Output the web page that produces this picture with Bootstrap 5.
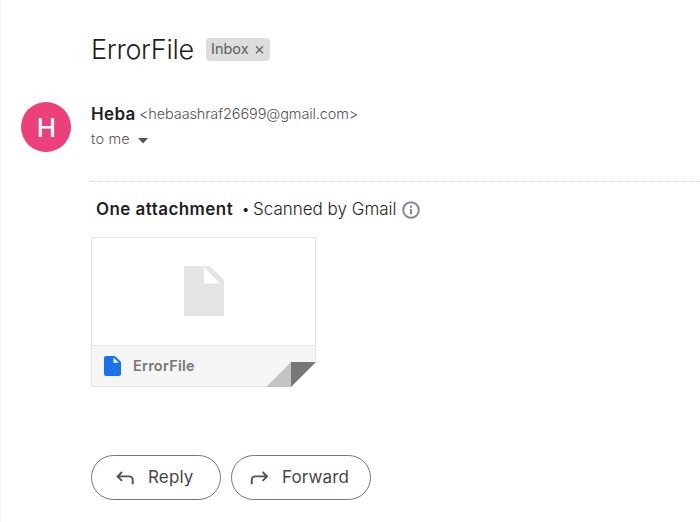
<!DOCTYPE html>
<html lang="en">
<head>
<meta charset="utf-8">
<meta name="viewport" content="width=device-width, initial-scale=1">
<title>ErrorFile</title>
<link href="https://cdn.jsdelivr.net/npm/bootstrap@5.3.0/dist/css/bootstrap.min.css" rel="stylesheet">
<style>
body{font-family:Inter,Roboto,"Liberation Sans",sans-serif;color:#1f1f1f;background:#fff;overflow:hidden;line-height:1}
.mail{height:522px;border-left:1px solid #f3f5fc;padding-left:90px}
.mail span,.mail h1{white-space:nowrap}
.subject-row{padding-top:35px;height:102px}
.subject{font-size:27px;font-weight:300;line-height:30px;width:115px;letter-spacing:-.3px}
.inbox-chip{height:23px;width:64px;margin-top:3px;padding:0 6px 0 5px;border-radius:4px;background:#ddd;color:#5e5e5e;font-size:14.5px}
.inbox-chip span{margin-top:-1px}
.sender-row{margin-left:-70px;height:79px}
.avatar{width:50px;height:50px;background:#ec407a;color:#fff;font-size:26px;font-weight:500;padding-left:1px;padding-top:2px}
.sender-info{margin-left:20px}
.from-line{height:24px}
.from-name{font-size:17px;font-weight:600;width:48px;letter-spacing:.35px}
.from-mail{font-size:14.5px;font-weight:300;color:#555;letter-spacing:-.12px}
.to-line{height:26px;color:#555;font-size:14.5px;font-weight:300;letter-spacing:.2px}
.divider{height:1px;background:repeating-linear-gradient(90deg,#d2d2d2 0 1px,#fff 1px 2px)}
.att-head{height:55px;padding-left:5px;font-size:17px}
.att-count{font-weight:600;width:146px;letter-spacing:.44px}
.att-dot{font-size:13px;width:11px}
.att-scan{font-weight:300;width:149px}
.att-card{width:225px;height:150px;border:1px solid #e5e5e5}
.att-preview{padding-bottom:2px}
.att-foot{height:41px;background:#f5f5f5;border-top:1px solid #e5e5e5;padding-left:12px}
.att-name{margin-left:12px;font-size:14.5px;font-weight:600;color:#777;letter-spacing:.25px}
.fold{right:-1px;bottom:-1px}
.actions{margin-top:68px;gap:10px}
.pill{height:45px;border:1px solid #747775;color:#444746;font-size:17px;line-height:1;padding:0 0 0 24px;letter-spacing:.15px}
.pill-reply{width:130px}
.pill-forward{width:140px;padding-left:18px}
.pill span{margin-left:14px}
</style>
<script src="https://cdn.jsdelivr.net/npm/bootstrap@5.3.0/dist/js/bootstrap.bundle.min.js"></script>
</head>
<body>
<main class="mail">
  <header class="subject-row d-flex align-items-start">
    <h1 class="subject mb-0">ErrorFile</h1>
    <div class="inbox-chip d-flex align-items-center justify-content-between"><span>Inbox</span>
      <svg width="9" height="9" viewBox="0 0 9 9" stroke="#666" stroke-width="1.3"><path d="M1 1.2l7 7M8 1.2l-7 7"/></svg></div>
  </header>
  <section class="sender-row d-flex align-items-start">
    <div class="avatar rounded-circle d-flex align-items-center justify-content-center">H</div>
    <div class="sender-info">
      <div class="from-line d-flex align-items-center"><span class="from-name">Heba</span><span class="from-mail">&lt;hebaashraf26699@gmail.com&gt;</span></div>
      <div class="to-line d-flex align-items-center"><span>to me</span>
        <svg class="ms-2 mt-1" width="10" height="6" viewBox="0 0 10 6"><path d="M0 0h10L5 5.4z" fill="#555"/></svg></div>
    </div>
  </section>
  <div class="divider"></div>
  <section>
    <div class="att-head d-flex align-items-center"><span class="att-count">One attachment</span>
      <span class="att-dot">•</span><span class="att-scan">Scanned by Gmail</span>
      <svg width="18" height="18" viewBox="0 0 18 18" fill="none" stroke="#85898d"><circle cx="9" cy="9" r="7.8" stroke-width="2"/><path d="M9 8v5.2M9 4.6v2.2" stroke-width="2.2"/></svg>
    </div>
    <div class="att-card d-flex flex-column position-relative">
      <div class="att-preview flex-grow-1 d-flex align-items-center justify-content-center">
        <svg width="40" height="50" viewBox="0 0 40 50"><path d="M0 0h26l14 14v36H0z" fill="#e5e5e5"/><path d="M20 1.5v16h16z" fill="#fff"/></svg>
      </div>
      <div class="att-foot d-flex align-items-center">
        <svg width="17" height="20" viewBox="0 0 17 20"><path d="M2 0h9l6 6v12a2 2 0 0 1-2 2H2a2 2 0 0 1-2-2V2a2 2 0 0 1 2-2z" fill="#1a73e8"/><path d="M9.5 1.5v5.2h5.2z" fill="#fff"/></svg>
        <span class="att-name">ErrorFile</span>
      </div>
      <svg class="fold position-absolute" width="50" height="25" viewBox="0 0 50 25"><path d="M25 0h25v25H0z" fill="#fff"/><path d="M0 25L25 0v25z" fill="#c4c4c4"/><path d="M25 0h25L25 25z" fill="#777"/></svg>
    </div>
  </section>
  <div class="actions d-flex">
    <button class="pill pill-reply btn rounded-pill d-flex align-items-center">
      <svg width="18" height="16" viewBox="0 0 18 16" fill="none" stroke="#505352" stroke-width="1.9"><path d="M6 2L1.6 6.4 6 10.8M1.8 6.4h11.1q3.8 0 3.8 3.8v4.1"/></svg><span>Reply</span></button>
    <button class="pill pill-forward btn rounded-pill d-flex align-items-center">
      <svg width="18" height="16" viewBox="0 0 18 16" fill="none" stroke="#505352" stroke-width="1.9"><path d="M12.6 2l4.4 4.4-4.4 4.4M16.8 6.4H5.5q-3.8 0-3.8 3.8v4.1"/></svg><span>Forward</span></button>
  </div>
</main>
</body>
</html>
